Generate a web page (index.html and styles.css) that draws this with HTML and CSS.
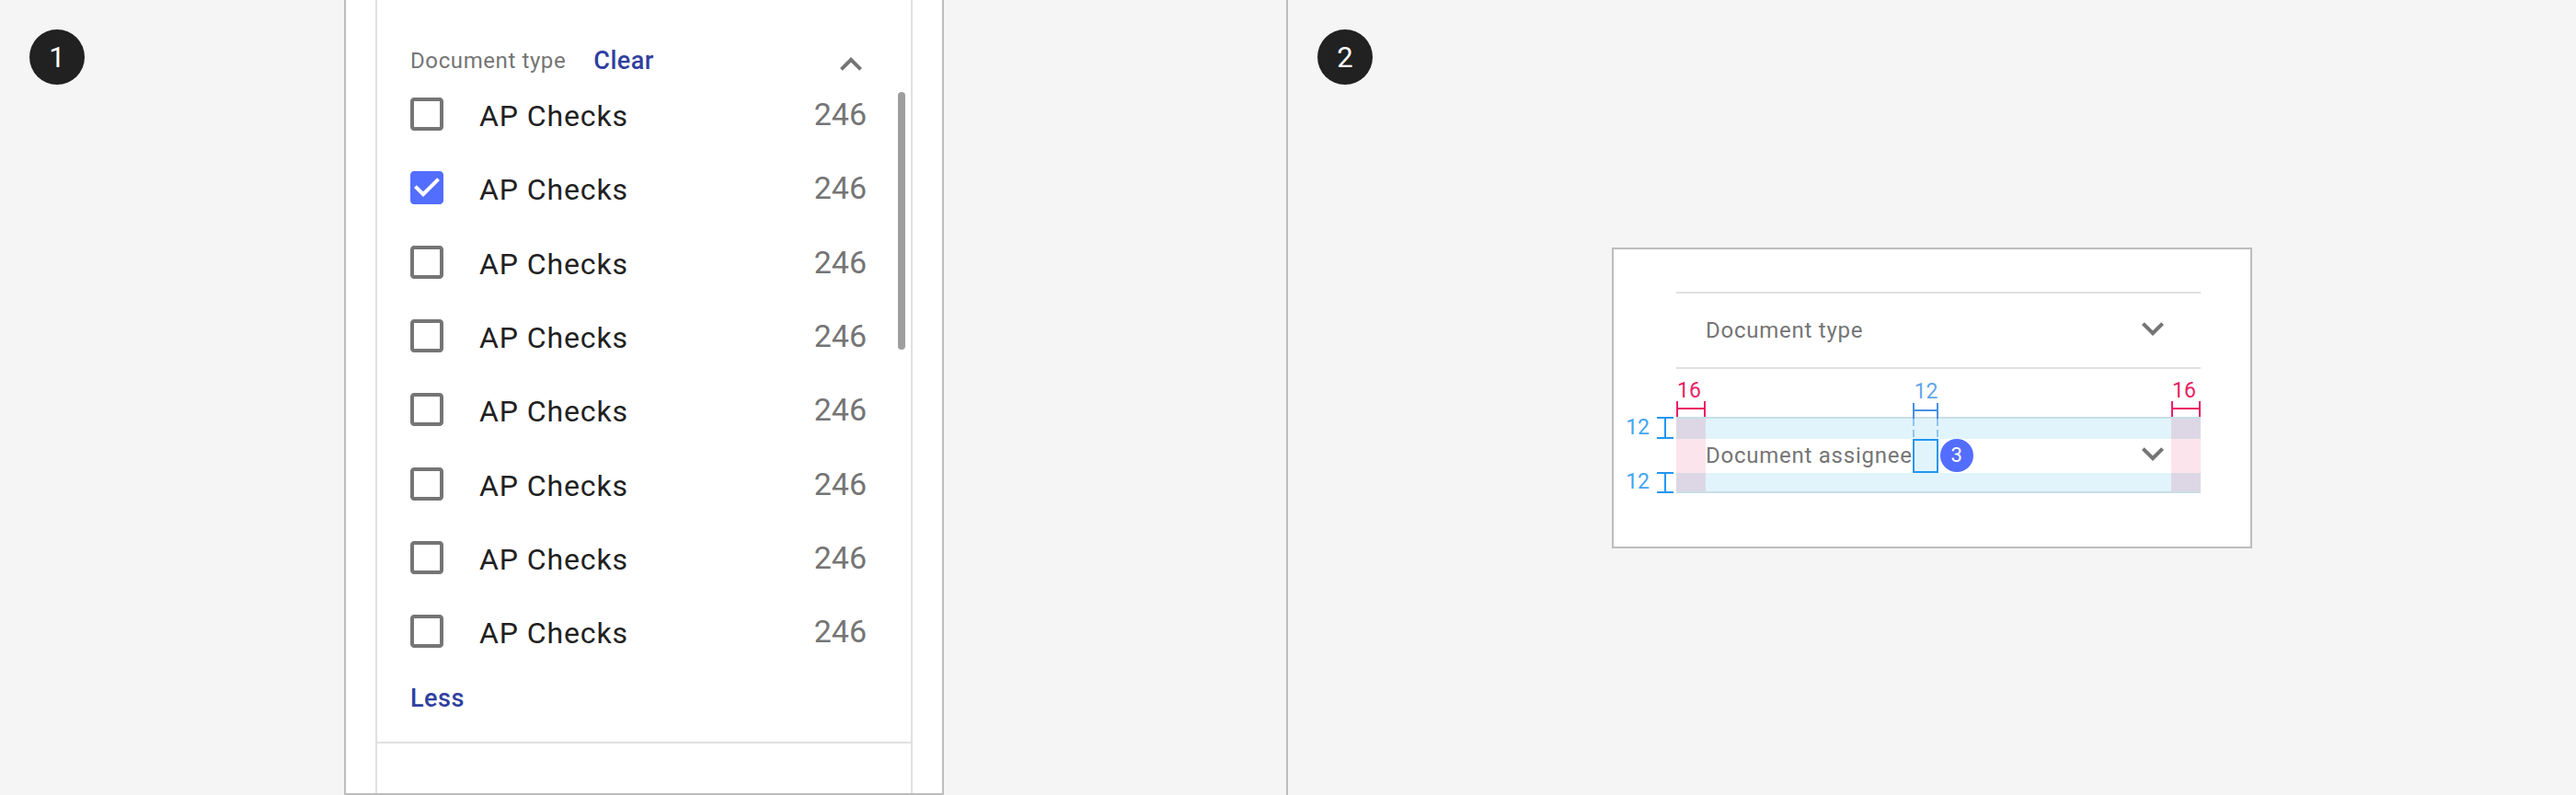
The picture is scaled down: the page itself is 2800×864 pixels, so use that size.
FILE: index.html
```html
<!DOCTYPE html>
<html lang="en">
<head>
<meta charset="utf-8">
<title>Filter spec</title>
<link rel="stylesheet" href="styles.css">
</head>
<body>
<section class="panel panel-left">
  <div class="step">1</div>
  <div class="frame">
    <div class="sheet">
      <div class="filter">
        <div class="filter-head">
          <span class="filter-title">Document type</span>
          <span class="link clear">Clear</span>
          <svg class="chev chev-up" width="24" height="15" viewBox="6 8 12 7.5"><path d="M12 8l-6 6 1.41 1.41L12 10.83l4.59 4.58L18 14z"/></svg>
        </div>
        <ul class="options">
          <li class="option"><svg class="cb" width="36" height="36" viewBox="3 3 18 18"><path d="M19 5v14H5V5h14m0-2H5c-1.1 0-2 .9-2 2v14c0 1.1.9 2 2 2h14c1.1 0 2-.9 2-2V5c0-1.1-.9-2-2-2z"/></svg><span class="opt-label">AP Checks</span><span class="opt-count">246</span></li>
          <li class="option"><svg class="cb cb-on" width="36" height="36" viewBox="3 3 18 18"><path d="M19 3H5c-1.11 0-2 .9-2 2v14c0 1.1.89 2 2 2h14c1.11 0 2-.9 2-2V5c0-1.1-.89-2-2-2zm-9 14l-5-5 1.41-1.41L10 14.17l7.59-7.59L19 8l-9 9z"/></svg><span class="opt-label">AP Checks</span><span class="opt-count">246</span></li>
          <li class="option"><svg class="cb" width="36" height="36" viewBox="3 3 18 18"><path d="M19 5v14H5V5h14m0-2H5c-1.1 0-2 .9-2 2v14c0 1.1.9 2 2 2h14c1.1 0 2-.9 2-2V5c0-1.1-.9-2-2-2z"/></svg><span class="opt-label">AP Checks</span><span class="opt-count">246</span></li>
          <li class="option"><svg class="cb" width="36" height="36" viewBox="3 3 18 18"><path d="M19 5v14H5V5h14m0-2H5c-1.1 0-2 .9-2 2v14c0 1.1.9 2 2 2h14c1.1 0 2-.9 2-2V5c0-1.1-.9-2-2-2z"/></svg><span class="opt-label">AP Checks</span><span class="opt-count">246</span></li>
          <li class="option"><svg class="cb" width="36" height="36" viewBox="3 3 18 18"><path d="M19 5v14H5V5h14m0-2H5c-1.1 0-2 .9-2 2v14c0 1.1.9 2 2 2h14c1.1 0 2-.9 2-2V5c0-1.1-.9-2-2-2z"/></svg><span class="opt-label">AP Checks</span><span class="opt-count">246</span></li>
          <li class="option"><svg class="cb" width="36" height="36" viewBox="3 3 18 18"><path d="M19 5v14H5V5h14m0-2H5c-1.1 0-2 .9-2 2v14c0 1.1.9 2 2 2h14c1.1 0 2-.9 2-2V5c0-1.1-.9-2-2-2z"/></svg><span class="opt-label">AP Checks</span><span class="opt-count">246</span></li>
          <li class="option"><svg class="cb" width="36" height="36" viewBox="3 3 18 18"><path d="M19 5v14H5V5h14m0-2H5c-1.1 0-2 .9-2 2v14c0 1.1.9 2 2 2h14c1.1 0 2-.9 2-2V5c0-1.1-.9-2-2-2z"/></svg><span class="opt-label">AP Checks</span><span class="opt-count">246</span></li>
          <li class="option"><svg class="cb" width="36" height="36" viewBox="3 3 18 18"><path d="M19 5v14H5V5h14m0-2H5c-1.1 0-2 .9-2 2v14c0 1.1.9 2 2 2h14c1.1 0 2-.9 2-2V5c0-1.1-.9-2-2-2z"/></svg><span class="opt-label">AP Checks</span><span class="opt-count">246</span></li>
        </ul>
        <div class="link less">Less</div>
        <div class="scrollbar"></div>
      </div>
    </div>
  </div>
</section>
<section class="panel panel-right">
  <div class="step">2</div>
  <div class="card">
    <div class="row-plain">
      <span class="row-label">Document type</span>
      <svg class="chev chev-down" width="24" height="15" viewBox="6 8.5 12 7.5"><path d="M16.59 8.59L12 13.170 7.41 8.59 6 10l6 6 6-6z"/></svg>
    </div>
    <div class="dims">
      <div class="hdim pink"><span class="dim-num">16</span><i class="hbar"></i></div>
      <div class="dims-mid"></div>
      <div class="hdim pink"><span class="dim-num">16</span><i class="hbar"></i></div>
    </div>
    <div class="band">
      <div class="vdim vdim-top"><span class="dim-num">12</span><i class="ibeam"></i></div>
      <div class="vdim vdim-bottom"><span class="dim-num">12</span><i class="ibeam"></i></div>
      <div class="band-row">
        <div class="pad"></div>
        <div class="band-content">
          <span class="row-label">Document assignee</span>
          <span class="gap-box"><span class="hdim blue gap-dim"><span class="dim-num">12</span><i class="hbar"></i></span></span>
          <span class="count-badge">3</span>
          <svg class="chev chev-down" width="24" height="15" viewBox="6 8.5 12 7.5"><path d="M16.59 8.59L12 13.17 7.41 8.59 6 10l6 6 6-6z"/></svg>
        </div>
        <div class="pad"></div>
      </div>
    </div>
  </div>
</section>
</body>
</html>
```

FILE: styles.css
```css
* { box-sizing: border-box; }

html, body {
  margin: 0;
  padding: 0;
}

body {
  width: 2800px;
  height: 864px;
  overflow: hidden;
  display: flex;
  background: #f5f5f5;
  font-family: Roboto, "Noto Sans", "Liberation Sans", sans-serif;
  color: #212121;
}

.panel {
  width: 1400px;
  height: 864px;
  flex: none;
}

.panel-left {
  display: grid;
  grid-template-columns: 374px 652px;
  border-right: 2px solid #bdbdbd;
}

.panel-right {
  display: grid;
  grid-template-columns: 1fr;
  grid-template-rows: 1fr;
}

.step {
  width: 60px;
  height: 60px;
  margin: 32px;
  border-radius: 50%;
  background: #212121;
  color: #fff;
  font-size: 31px;
  line-height: 62px;
  text-align: center;
  align-self: start;
  justify-self: start;
}

.panel-right .step {
  grid-area: 1 / 1;
}

/* ---------- left: filter panel ---------- */

.frame {
  height: 864px;
  background: #fff;
  border: 2px solid #bdbdbd;
  border-top: 0;
  padding: 0 32px;
}

.sheet {
  height: 100%;
  border-left: 2px solid #e0e0e0;
  border-right: 2px solid #e0e0e0;
}

.filter {
  position: relative;
  padding: 48px 48px 29px 36px;
  border-bottom: 2px solid #e0e0e0;
}

.filter-head {
  display: flex;
  align-items: center;
  height: 36px;
}

.filter-title {
  font-size: 24px;
  line-height: 36px;
  letter-spacing: 0.6px;
  color: #757575;
}

.link {
  font-size: 27px;
  line-height: 36px;
  font-weight: 500;
  letter-spacing: 0.5px;
  color: #303f9f;
}

.clear {
  margin-left: 30px;
}

.chev {
  display: block;
  flex: none;
  fill: #757575;
}

.chev-up {
  margin-left: auto;
  margin-right: 5px;
  margin-top: 7px;
}

.options {
  list-style: none;
  margin: 0;
  padding: 0;
}

.option {
  display: flex;
  align-items: center;
  height: 80.3px;
}

.cb {
  display: block;
  flex: none;
  fill: #757575;
}

.cb-on {
  fill: #536dfe;
}

.opt-label {
  flex: 1;
  margin-left: 39px;
  padding-top: 4px;
  font-size: 32px;
  line-height: 40px;
  letter-spacing: 0.9px;
  color: #212121;
}

.opt-count {
  font-size: 34px;
  line-height: 40px;
  color: #757575;
}

.less {
  margin-top: 15px;
}

.scrollbar {
  position: absolute;
  top: 100px;
  right: 6px;
  width: 8px;
  height: 280px;
  border-radius: 4px;
  background: #9e9e9e;
}

/* ---------- right: spec card ---------- */

.card {
  grid-area: 1 / 1;
  align-self: center;
  justify-self: center;
  width: 696px;
  background: #fff;
  border: 2px solid #bdbdbd;
  padding: 46px 54px 58px 68px;
}

.row-plain {
  display: flex;
  align-items: center;
  height: 84px;
  border-top: 2px solid #e0e0e0;
  border-bottom: 2px solid #e0e0e0;
  padding: 0 40px 0 32px;
}

.row-label {
  font-size: 24px;
  line-height: 36px;
  letter-spacing: 0.75px;
  color: #757575;
  white-space: nowrap;
}

.chev-down {
  margin-left: auto;
  margin-bottom: 3px;
}

.dims {
  display: grid;
  grid-template-columns: 32px 1fr 32px;
  align-items: end;
  height: 52px;
}

.hdim {
  display: flex;
  flex-direction: column;
}

.dim-num {
  font-size: 23px;
  line-height: 24px;
  margin-bottom: -1px;
  padding-left: 1px;
}

.hbar {
  display: block;
  height: 17px;
  border-left: 2px solid currentColor;
  border-right: 2px solid currentColor;
  background: linear-gradient(currentColor, currentColor) center / 100% 2px no-repeat;
}

.pink {
  color: #e91e63;
}

.blue {
  color: #4a90e2;
}

.blue .dim-num {
  color: #64a5ea;
  margin-bottom: 0;
  padding-left: 2px;
}

.band {
  position: relative;
  border-top: 2px solid #c9dde7;
  border-bottom: 2px solid #c9dde7;
  padding: 22px 0 21px;
  background:
    linear-gradient(to right, #ddd7e5 0 32px, transparent 32px calc(100% - 32px), #ddd7e5 calc(100% - 32px)),
    #e1f4fc;
}

.band-row {
  display: grid;
  grid-template-columns: 32px 1fr 32px;
  height: 36px;
}

.pad {
  background: #fce4ec;
}

.band-content {
  display: flex;
  align-items: center;
  background: #fff;
  padding-right: 8px;
}

.gap-box {
  position: relative;
  width: 28px;
  height: 37px;
  align-self: flex-start;
  border: 2px solid #2196f3;
  background: #e1f4fc;
  flex: none;
}

.gap-box::before {
  content: "";
  position: absolute;
  left: -2px;
  right: -2px;
  bottom: 100%;
  height: 24px;
  background:
    repeating-linear-gradient(to bottom, #90c4f4 0 8px, transparent 8px 12px) left top / 2px 100% no-repeat,
    repeating-linear-gradient(to bottom, #90c4f4 0 8px, transparent 8px 12px) right top / 2px 100% no-repeat;
}

.gap-dim {
  position: absolute;
  left: -2px;
  width: 28px;
  bottom: calc(100% + 24px);
}

.count-badge {
  flex: none;
  width: 36px;
  height: 36px;
  margin-left: 2px;
  border-radius: 50%;
  background: #536dfe;
  color: #fff;
  font-size: 22px;
  line-height: 36px;
  text-align: center;
}

.vdim {
  position: absolute;
  right: calc(100% + 3px);
  display: flex;
  align-items: center;
  gap: 8px;
  color: #2196f3;
}

.vdim .dim-num {
  color: #42a5f5;
  margin: 0;
  padding: 0;
}

.vdim-top {
  top: -2px;
  height: 24px;
}

.vdim-bottom {
  bottom: -2px;
  height: 23px;
}

.ibeam {
  display: block;
  width: 18px;
  height: 100%;
  border-top: 2px solid currentColor;
  border-bottom: 2px solid currentColor;
  background: linear-gradient(currentColor, currentColor) center / 2px 100% no-repeat;
}
```
